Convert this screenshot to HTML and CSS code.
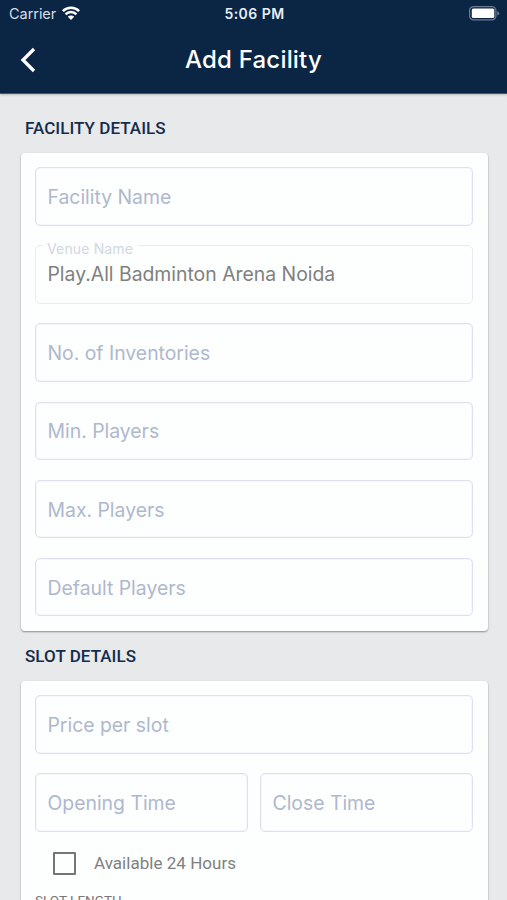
FILE: index.html
```html
<!DOCTYPE html>
<html lang="en">
<head>
<meta charset="utf-8">
<title>Add Facility</title>
<link rel="stylesheet" href="styles.css">
</head>
<body>
<div class="screen">
  <header class="header">
    <div class="status">
      <div class="status-left">
        <span class="carrier">Carrier</span>
        <svg class="wifi" width="18" height="14" viewBox="0 0 18 14" fill="none" stroke="#fff" stroke-width="2.6">
          <path d="M.9 5.1a11.5 11.5 0 0 1 16.2 0"/>
          <path d="M3.6 8.3a7.6 7.6 0 0 1 10.8 0"/>
          <path d="M9 13.9 5.8 10.8a4.5 4.5 0 0 1 6.4 0Z" fill="#fff" stroke="none"/>
        </svg>
      </div>
      <span class="clock">5:06 PM</span>
      <svg class="battery" width="31" height="15" viewBox="0 0 31 15">
        <rect x=".6" y=".6" width="26.3" height="13.3" rx="4" fill="none" stroke="#6d7b92" stroke-width="1.2"/>
        <rect x="2.8" y="2.5" width="22.5" height="9.5" rx="1.5" fill="#fff"/>
        <path d="M28.2 5v4.6q2-.7 2-2.3t-2-2.3Z" fill="#6d7b92"/>
      </svg>
    </div>
    <div class="nav">
      <svg class="back" width="16" height="26" viewBox="0 0 16 26" fill="none" stroke="#fff" stroke-width="3.3"><path d="M14 2 3 13l11 11"/></svg>
      <h1 class="title">Add Facility</h1>
    </div>
  </header>
  <main class="content">
    <h2 class="section">FACILITY DETAILS</h2>
    <section class="card">
      <div class="field"><span>Facility Name</span></div>
      <div class="field disabled"><label class="float">Venue Name</label><span>Play.All Badminton Arena Noida</span></div>
      <div class="field"><span>No. of Inventories</span></div>
      <div class="field"><span>Min. Players</span></div>
      <div class="field"><span>Max. Players</span></div>
      <div class="field"><span>Default Players</span></div>
    </section>
    <h2 class="section second">SLOT DETAILS</h2>
    <section class="card slot">
      <div class="field"><span>Price per slot</span></div>
      <div class="pair">
        <div class="field"><span>Opening Time</span></div>
        <div class="field"><span>Close Time</span></div>
      </div>
      <div class="check"><i class="box"></i><span class="check-text">Available 24 Hours</span></div>
      <div class="length">SLOT LENGTH</div>
    </section>
  </main>
</div>
</body>
</html>
```
FILE: styles.css
```css
* { box-sizing: border-box; }
body { margin: 0; }
.screen {
  width: 507px;
  height: 900px;
  overflow: hidden;
  background: #e7e9eb;
  font-family: Inter, sans-serif;
}
.header {
  height: 94px;
  background: #0b2545;
  color: #fff;
  border-bottom: 1px solid #405570;
  box-shadow: 0 1px 2px rgba(0, 0, 0, .2);
}
.status {
  height: 27px;
  display: grid;
  grid-template-columns: 1fr auto 1fr;
  align-items: center;
  padding: 0 7px 0 9px;
}
.status-left { display: flex; align-items: center; gap: 6px; }
.wifi { position: relative; top: -1px; }
.carrier { font-size: 14.5px; color: #d5dde7; letter-spacing: -.05px; }
.clock { font-size: 14px; font-weight: 600; color: #e8eef5; letter-spacing: .45px; }
.battery { justify-self: end; }
.nav {
  height: 66px;
  display: grid;
  grid-template-columns: 40px 1fr 40px;
  align-items: center;
}
.back { margin-left: 20px; }
.title {
  margin: 0;
  text-align: center;
  font-size: 24px;
  line-height: 30px;
  font-weight: 500;
  letter-spacing: .2px;
}
.content { padding: 24px 19.5px 0 20.5px; }
.section {
  margin: 0 0 15px 4.5px;
  font-family: Roboto, sans-serif;
  font-size: 17px;
  line-height: 20px;
  font-weight: 500;
  letter-spacing: .05px;
  color: #142c4c;
}
.second { margin-top: 15px; }
.card {
  height: 478px;
  padding: 14px 14.5px;
  display: flex;
  flex-direction: column;
  gap: 19.7px;
  background: #fdfefe;
  border-radius: 4px;
  box-shadow: 0 1px 2px rgba(0, 0, 0, .4);
}
.slot { height: 300px; }
.field {
  flex: none;
  position: relative;
  height: 58.5px;
  display: flex;
  align-items: center;
  padding: 1px 11.5px 0;
  border: 1px solid #dedff0;
  box-shadow: inset 0 0 0 .5px #eeeff9;
  border-radius: 5px;
  color: #afb8cd;
  font-size: 19.4px;
  letter-spacing: -.01px;
  white-space: nowrap;
}
.disabled { border-color: #e8ecf1; color: #808080; padding-bottom: 2px; box-shadow: none; }
.float {
  position: absolute;
  left: 7px;
  top: -6px;
  padding: 0 5px 0 4px;
  background: #fdfefe;
  color: #d2d7e2;
  font-size: 14px;
  line-height: 17px;
  letter-spacing: .15px;
}
.pair { display: grid; grid-template-columns: 1fr 1fr; gap: 12px; }
.check {
  display: flex;
  align-items: center;
  height: 24px;
  padding-left: 18px;
}
.box { width: 23px; height: 23px; border: 2.5px solid #757575; border-radius: 1px; }
.check-text {
  margin-left: 18px;
  font-family: Roboto, sans-serif;
  font-size: 17px;
  letter-spacing: .03px;
  color: #808080;
}
.length {
  margin-top: -3px;
  font-family: Roboto, sans-serif;
  font-size: 13.5px;
  line-height: 16px;
  color: #777;
}
```
